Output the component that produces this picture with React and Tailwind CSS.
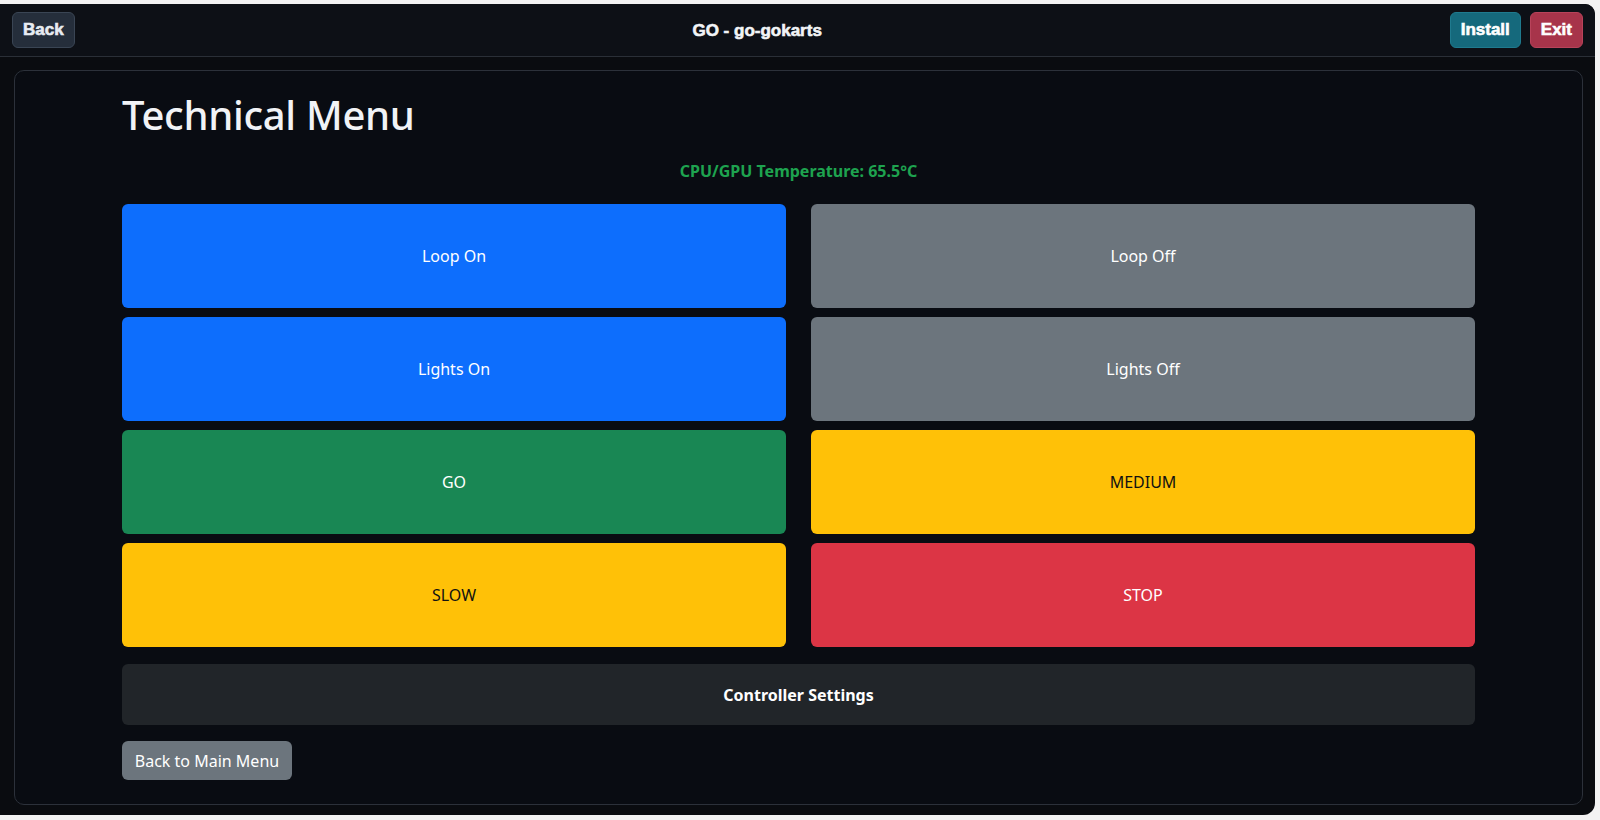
import React from "react";

const actions = [
  { label: "Loop On", cls: "bg-[#0d6efd] text-white" },
  { label: "Loop Off", cls: "bg-[#6c757d] text-white" },
  { label: "Lights On", cls: "bg-[#0d6efd] text-white" },
  { label: "Lights Off", cls: "bg-[#6c757d] text-white" },
  { label: "GO", cls: "bg-[#198754] text-white" },
  { label: "MEDIUM", cls: "bg-[#ffc107] text-[#111]" },
  { label: "SLOW", cls: "bg-[#ffc107] text-[#111]" },
  { label: "STOP", cls: "bg-[#dc3545] text-white" },
];

const App = () => {
  return (
    <div className="w-[1600px] h-[820px] bg-[#f3f3f3] pt-[4px] pr-[5px] pb-[5px] overflow-hidden">
      <div className="h-full flex flex-col bg-[#0a0c10] rounded-br-[12px] rounded-tr-[10px] overflow-hidden">
        {/* Top bar */}
        <div
          className="h-[53px] shrink-0 flex items-center justify-between px-[12px] bg-[#0d1016] border-b border-[#2a2f37] [-webkit-text-stroke:0.6px_currentColor]"
          style={{ fontFamily: '"Liberation Sans", Arial, sans-serif' }}
        >
          <button className="h-[36px] px-[10px] rounded-[6px] bg-[#252e3b] border border-[#3a4554] text-[#e8ecf2] text-[17px] font-bold">
            Back
          </button>
          <div className="mr-[10px] mt-[2px] text-[17px] font-bold text-[#f2f4f7]">GO - go-gokarts</div>
          <div className="flex gap-[9px]">
            <button className="h-[36px] px-[10px] rounded-[6px] bg-[#15697c] border border-[#1f7a8e] text-white text-[17px] font-bold">
              Install
            </button>
            <button className="h-[36px] px-[10px] rounded-[6px] bg-[#a7344a] border border-[#b8435a] text-white text-[17px] font-bold">
              Exit
            </button>
          </div>
        </div>

        {/* Main panel */}
        <div className="flex-1 pt-[13px] pl-[14px] pr-[12px] pb-[10px]">
          <div
            className="h-full rounded-[10px] border border-[#2c313a] bg-[#090c12] px-[107px] pt-[19px]"
            style={{ fontFamily: '"Noto Sans", "Open Sans", sans-serif' }}
          >
            <h1 className="text-[40px] leading-[50px] font-medium text-[#f1f3f6] tracking-[-0.3px]">Technical Menu</h1>

            <p className="mt-[21px] text-center text-[16px] leading-[20px] font-bold text-[#1ea34f]">
              CPU/GPU Temperature: 65.5°C
            </p>

            <div className="mt-[23px] grid grid-cols-2 gap-x-[25px] gap-y-[9px]">
              {actions.map((a) => (
                <button
                  key={a.label}
                  className={`h-[104px] rounded-[6px] text-[16px] flex items-center justify-center ${a.cls}`}
                >
                  {a.label}
                </button>
              ))}
            </div>

            <button className="mt-[17px] w-full h-[61px] rounded-[6px] bg-[#212529] text-white text-[16px] font-bold">
              Controller Settings
            </button>

            <button className="mt-[16px] h-[39px] w-[170px] rounded-[6px] bg-[#6c757d] text-white text-[16px]">
              Back to Main Menu
            </button>
          </div>
        </div>
      </div>
    </div>
  );
};

export default App;
